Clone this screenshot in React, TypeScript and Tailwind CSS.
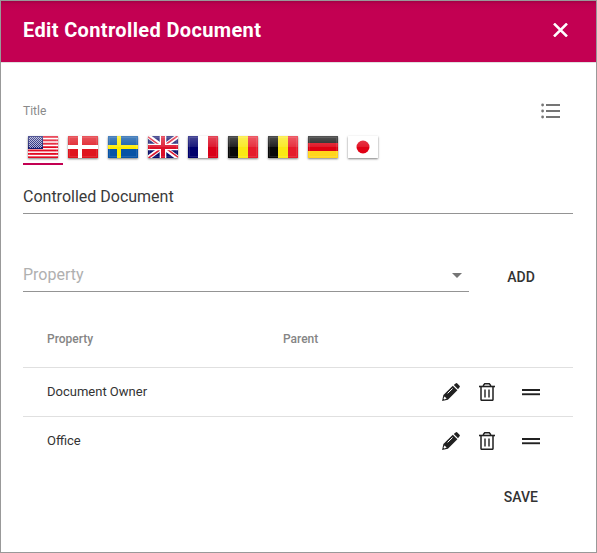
import type { ReactNode } from "react";

function Stripes() {
  return (
    <>
      <rect width="30" height="22" fill="#fff" />
      {[0, 1, 2, 3, 4, 5, 6].map((i) => (
        <rect key={i} y={(i * 44) / 13} width="30" height="1.9" fill="#e20a22" />
      ))}
      <rect width="15" height="13" fill="#14186e" />
      {[1, 2, 3, 4, 5, 6, 7, 8, 9, 10, 11].map((y) => (
        <path
          key={y}
          d={`M${1 + (y % 2)} ${y + 0.5}H14`}
          stroke="#a9acd4"
          strokeDasharray="1 1"
        />
      ))}
    </>
  );
}

function Cross({ field, cross, x, w }: { field: string; cross: string; x: number; w: number }) {
  return (
    <>
      <rect width="30" height="22" fill={field} />
      <path d={`M${x} 0h${w}v22h-${w}zM0 ${11 - w / 2}h30v${w}H0z`} fill={cross} />
    </>
  );
}

function Union() {
  return (
    <>
      <rect width="30" height="22" fill="#0d116c" />
      <path d="M0 0l30 22M30 0L0 22" stroke="#fff" strokeWidth="4.4" />
      <path d="M0 .8l13 9.5M30 21.2l-13-9.5M29.5 0L17 9M.5 22L13 13" stroke="#dc1830" strokeWidth="1.6" />
      <path d="M15 0v22M0 11h30" stroke="#fff" strokeWidth="6.6" />
      <path d="M15 0v22M0 11h30" stroke="#dc0f28" strokeWidth="4" />
    </>
  );
}

function Vertical({ colors }: { colors: string[] }) {
  return (
    <>
      {colors.map((c, i) => (
        <rect key={i} x={i * 10} width="10" height="22" fill={c} />
      ))}
    </>
  );
}

function Germany() {
  return (
    <>
      <rect width="30" height="7" fill="#111" />
      <rect y="7" width="30" height="8" fill="#dc0012" />
      <rect y="15" width="30" height="7" fill="#ffd51c" />
    </>
  );
}

function Japan() {
  return (
    <>
      <rect width="30" height="22" fill="#fff" />
      <circle cx="15" cy="11" r="6.5" fill="#e00014" />
    </>
  );
}

const belgium = ["#080808", "#fae814", "#e51b2b"];

const flags: { name: string; art: ReactNode }[] = [
  { name: "English (US)", art: <Stripes /> },
  { name: "Dansk", art: <Cross field="#df151f" cross="#fff" x={10} w={4} /> },
  { name: "Svenska", art: <Cross field="#0753a5" cross="#ffec00" x={9} w={4} /> },
  { name: "English (UK)", art: <Union /> },
  { name: "Français", art: <Vertical colors={["#00006c", "#fff", "#d90018"]} /> },
  { name: "Français (BE)", art: <Vertical colors={belgium} /> },
  { name: "Nederlands (BE)", art: <Vertical colors={belgium} /> },
  { name: "Deutsch", art: <Germany /> },
  { name: "日本語", art: <Japan /> },
];

function Flag({ children }: { children: ReactNode }) {
  return (
    <svg
      width="30"
      height="22"
      viewBox="0 0 30 22"
      className="block shadow-[0_1px_2px_rgba(0,0,0,0.5)]"
    >
      <defs>
        <linearGradient id="gloss" x2="0" y2="1">
          <stop offset="0" stopColor="#fff" stopOpacity=".28" />
          <stop offset="1" stopColor="#fff" stopOpacity=".1" />
        </linearGradient>
      </defs>
      {children}
      <rect width="30" height="11" fill="url(#gloss)" />
      <rect x="1.5" y="1.5" width="27" height="19" fill="none" stroke="#fff" strokeOpacity=".1" />
    </svg>
  );
}

function Pencil() {
  return (
    <svg width="18" height="18" viewBox="0 0 18 18" className="block">
      <path d="M11.8 2l1.8-1.5q.9-.8 1.7 0l2.2 2.2q.8.8 0 1.6L16 6.2z" fill="#212121" />
      <path d="M10.8 2.7l4.6 4.6L5.9 16.7.1 18l1.3-5.9z" fill="#212121" />
      <path d="M5.6 10.4l5-4.9" stroke="#fff" strokeWidth="1" />
      <path d="M2.5 13.4l2.2 2.2-2.4.9-.8-.8z" fill="#fff" />
    </svg>
  );
}

function Trash() {
  return (
    <svg width="16" height="18" viewBox="0 0 16 18" className="block" fill="none" stroke="#212121">
      <path d="M0 3.5h16" strokeWidth="1.6" />
      <path d="M4.5 3.2V2.2L5.7.8h4.6l1.2 1.4v1" strokeWidth="1.5" />
      <path d="M2 4v12.5q0 .8.8.8h10.4q.8 0 .8-.8V4" strokeWidth="1.5" />
      <path d="M6 6.5v8M10 6.5v8" strokeWidth="1.4" />
    </svg>
  );
}

function Handle() {
  return (
    <svg width="18" height="7" viewBox="0 0 18 7" className="block" fill="#212121">
      <rect width="18" height="2" />
      <rect y="4.3" width="18" height="1.9" />
    </svg>
  );
}

function Row({ name }: { name: string }) {
  return (
    <div className="flex h-[49px] items-center border-t border-[#e0e0e0] pl-6 pr-[33px]">
      <span className="flex-1 text-[13px] text-[#333]">{name}</span>
      <button className="mr-[19px]"><Pencil /></button>
      <button className="mr-[27px]"><Trash /></button>
      <button className="mt-px"><Handle /></button>
    </div>
  );
}

export default function App() {
  return (
    <div className="h-[553px] w-[597px] border border-[#999] bg-white font-['Roboto',sans-serif]">
      <header className="flex h-[62px] items-center justify-between border-b border-[#e0e0e0] bg-[#c30052] bg-[linear-gradient(#a20045,#bb004e_3px,#c30052_10px)] pl-[22px] pr-7 text-white">
        <h1 className="mb-1 text-xl font-bold leading-6 tracking-[0.36px]">Edit Controlled Document</h1>
        <button className="mb-[3px]">
          <svg width="15" height="14" viewBox="0 0 15 14" className="block">
            <path d="M1 .5l13 13M14 .5L1 13.5" stroke="#fff" strokeWidth="2.5" />
          </svg>
        </button>
      </header>

      <main className="pl-[22px] pr-[23px] pt-[38px]">
        <div className="flex h-5 items-center justify-between pr-[13px]">
          <label className="text-xs leading-5 text-[#8a8a8a]">Title</label>
          <svg width="19" height="16" viewBox="0 0 19 16" fill="#757575">
            {[2, 8, 14].map((y) => (
              <g key={y}>
                <circle cx="1.6" cy={y} r="1.4" />
                <rect x="5" y={y - 1} width="14" height="2" />
              </g>
            ))}
          </svg>
        </div>

        <div className="mt-[7px] flex h-[37px]">
          {flags.map((f, i) => (
            <button
              key={f.name}
              aria-label={f.name}
              className={
                i === 0
                  ? "flex w-10 items-start justify-center border-b-2 border-[#c30052] pt-2"
                  : "flex w-10 items-start justify-center border-b-2 border-transparent pt-2"
              }
            >
              <Flag>{f.art}</Flag>
            </button>
          ))}
        </div>

        <div className="mt-[15px] flex h-[34px] items-center border-b border-[#949494] text-base text-[#3a3a3a]">
          Controlled Document
        </div>

        <div className="mt-[43px] flex h-[35px]">
          <div className="flex w-[446px] items-center justify-between border-b border-[#949494] pr-[7px] text-base text-[#b0b0b0]">
            <span className="pt-0.5">Property</span>
            <svg width="10" height="5" viewBox="0 0 10 5" className="mt-0.5 block">
              <path d="M0 0h10L5 5z" fill="#757575" />
            </svg>
          </div>
          <button className="flex-1 pt-1 text-sm font-medium text-[#333]">ADD</button>
        </div>

        <section className="mt-[18px]">
          <div className="flex h-[57px] items-center pl-6 text-xs font-medium text-[#858585]">
            <span className="w-[236px]">Property</span>
            <span>Parent</span>
          </div>
          <Row name="Document Owner" />
          <Row name="Office" />
        </section>

        <div className="mt-[22px] flex justify-end pr-[35px]">
          <button className="text-sm font-medium leading-5 text-[#333]">SAVE</button>
        </div>
      </main>
    </div>
  );
}
